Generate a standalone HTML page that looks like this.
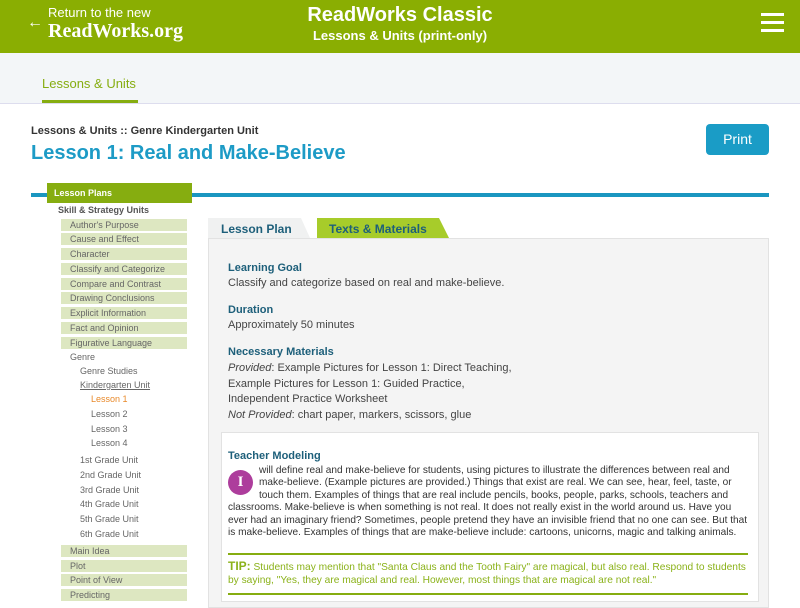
<!DOCTYPE html>
<html><head><meta charset="utf-8"><style>
*{margin:0;padding:0;box-sizing:border-box}
body{width:800px;height:600px;overflow:hidden;background:#fff;font-family:"Liberation Sans",Arial,sans-serif;position:relative}
.a{position:absolute;white-space:nowrap}
.hdr{position:absolute;left:0;top:0;width:800px;height:53px;background:#8aae02}
.sb{position:absolute;left:61px;width:126px;height:12px;background:#dde7c1;font-size:9px;color:#666;padding-left:9px;line-height:12px}
.sl{position:absolute;font-size:9px;color:#666;line-height:12px}
.h{font-size:11px;font-weight:bold;color:#1d5f7a}
.t{font-size:11px;color:#444}
</style></head><body>
<div class="hdr"></div>
<div class="a" style="left:27px;top:14px;color:#fff;font-size:16px">←</div>
<div class="a" style="left:48px;top:5px;color:#fff;font-size:13px">Return to the new</div>
<div class="a" style="left:48px;top:20px;color:#fff;font-size:20px;font-weight:bold;font-family:'Liberation Serif',serif">ReadWorks<span style="font-size:20px">.org</span></div>
<div class="a" style="left:0;width:800px;text-align:center;top:4px;color:#fff;font-size:20px;font-weight:bold">ReadWorks Classic</div>
<div class="a" style="left:0;width:800px;text-align:center;top:28px;color:#fff;font-size:13px;font-weight:bold">Lessons &amp; Units (print-only)</div>
<div class="a" style="left:761px;top:13px;width:23px;height:3px;background:#fff"></div>
<div class="a" style="left:761px;top:21px;width:23px;height:3px;background:#fff"></div>
<div class="a" style="left:761px;top:29px;width:23px;height:3px;background:#fff"></div>
<div class="a" style="left:0;top:53px;width:800px;height:51px;background:#f3f6f8;border-bottom:1px solid #dde"></div>
<div class="a" style="left:42px;top:76px;font-size:13px;color:#86ad10">Lessons &amp; Units</div>
<div class="a" style="left:42px;top:100px;width:96px;height:3px;background:#86ad10"></div>
<div class="a" style="left:31px;top:125px;font-size:11px;font-weight:bold;color:#333">Lessons &amp; Units :: Genre Kindergarten Unit</div>
<div class="a" style="left:31px;top:142px;font-size:20px;font-weight:bold;color:#1d9bc6">Lesson 1: Real and Make-Believe</div>
<div class="a" style="left:706px;top:124px;width:63px;height:31px;background:#1a9cc6;border-radius:4px;color:#fff;font-size:14px;text-align:center;line-height:31px">Print</div>
<div class="a" style="left:31px;top:193px;width:738px;height:4px;background:#1a96c0"></div>
<div class="a" style="left:47px;top:183px;width:145px;height:20px;background:#86ad10;color:#fff;font-size:9px;font-weight:bold;padding-left:7px;line-height:20px">Lesson Plans</div>
<div class="sl" style="left:58px;top:204px;font-weight:bold;color:#555">Skill &amp; Strategy Units</div>
<div class="sb" style="top:219px">Author's Purpose</div>
<div class="sb" style="top:233px">Cause and Effect</div>
<div class="sb" style="top:248px">Character</div>
<div class="sb" style="top:263px">Classify and Categorize</div>
<div class="sb" style="top:278px">Compare and Contrast</div>
<div class="sb" style="top:292px">Drawing Conclusions</div>
<div class="sb" style="top:307px">Explicit Information</div>
<div class="sb" style="top:322px">Fact and Opinion</div>
<div class="sb" style="top:337px">Figurative Language</div>
<div class="sl" style="left:70px;top:351px">Genre</div>
<div class="sl" style="left:80px;top:365px">Genre Studies</div>
<div class="sl" style="left:80px;top:379px;text-decoration:underline">Kindergarten Unit</div>
<div class="sl" style="left:91px;top:393px;color:#e8892a">Lesson 1</div>
<div class="sl" style="left:91px;top:408px">Lesson 2</div>
<div class="sl" style="left:91px;top:423px">Lesson 3</div>
<div class="sl" style="left:91px;top:437px">Lesson 4</div>
<div class="sl" style="left:80px;top:454px">1st Grade Unit</div>
<div class="sl" style="left:80px;top:469px">2nd Grade Unit</div>
<div class="sl" style="left:80px;top:484px">3rd Grade Unit</div>
<div class="sl" style="left:80px;top:498px">4th Grade Unit</div>
<div class="sl" style="left:80px;top:513px">5th Grade Unit</div>
<div class="sl" style="left:80px;top:528px">6th Grade Unit</div>
<div class="sb" style="top:545px">Main Idea</div>
<div class="sb" style="top:560px">Plot</div>
<div class="sb" style="top:574px">Point of View</div>
<div class="sb" style="top:589px">Predicting</div>
<svg class="a" style="left:208px;top:217px" width="250" height="22"><polygon points="0,1 93,1 102,21 0,21" fill="#f0f1f1"/><polygon points="109,1 231,1 241,21 109,21" fill="#a7cc2a"/></svg>
<div class="a" style="left:221px;top:222px;font-size:12px;font-weight:bold;color:#1d5f7a">Lesson Plan</div>
<div class="a" style="left:329px;top:222px;font-size:12px;font-weight:bold;color:#1d5f7a">Texts &amp; Materials</div>
<div class="a" style="left:208px;top:238px;width:561px;height:370px;background:#f4f4f4;border:1px solid #e2e2e2"></div>
<div class="a h" style="left:228px;top:262px">Learning Goal</div>
<div class="a t" style="left:228px;top:277px">Classify and categorize based on real and make-believe.</div>
<div class="a h" style="left:228px;top:304px">Duration</div>
<div class="a t" style="left:228px;top:319px">Approximately 50 minutes</div>
<div class="a h" style="left:228px;top:346px">Necessary Materials</div>
<div class="a t" style="left:228px;top:361px;line-height:15.5px"><i>Provided</i>: Example Pictures for Lesson 1: Direct Teaching,<br>Example Pictures for Lesson 1: Guided Practice,<br>Independent Practice Worksheet<br><i>Not Provided</i>: chart paper, markers, scissors, glue</div>
<div class="a" style="left:221px;top:432px;width:538px;height:170px;background:#fff;border:1px solid #e2e2e2"></div>
<div class="a h" style="left:228px;top:450px">Teacher Modeling</div>
<div class="a" style="left:228px;top:470px;width:25px;height:25px;border-radius:50%;background:#ad3d9c;color:#fff;font-family:'Liberation Serif',serif;font-weight:bold;font-size:15px;text-align:center;line-height:25px">I</div>
<div class="a t" style="left:228px;top:465px;width:524px;line-height:12.4px;font-size:10.1px;color:#333">
<div style="padding-left:31px">will define real and make-believe for students, using pictures to illustrate the differences between real and</div>
<div style="padding-left:31px">make-believe. (Example pictures are provided.) Things that exist are real. We can see, hear, feel, taste, or</div>
<div style="padding-left:31px">touch them. Examples of things that are real include pencils, books, people, parks, schools, teachers and</div>
<div>classrooms. Make-believe is when something is not real. It does not really exist in the world around us. Have you</div>
<div>ever had an imaginary friend? Sometimes, people pretend they have an invisible friend that no one can see. But that</div>
<div>is make-believe. Examples of things that are make-believe include: cartoons, unicorns, magic and talking animals.</div></div>
<div class="a" style="left:228px;top:553px;width:520px;height:2px;background:#86ad10"></div>
<div class="a" style="left:228px;top:560px;width:520px;white-space:normal;font-size:10.2px;line-height:13px;color:#8bb21a"><b style="font-size:12px">TIP:</b> Students may mention that "Santa Claus and the Tooth Fairy" are magical, but also real. Respond to students by saying, "Yes, they are magical and real. However, most things that are magical are not real."</div>
<div class="a" style="left:228px;top:593px;width:520px;height:2px;background:#86ad10"></div>
</body></html>
